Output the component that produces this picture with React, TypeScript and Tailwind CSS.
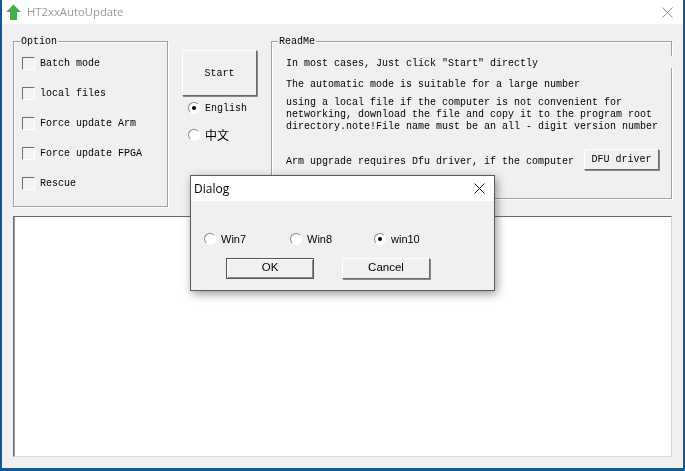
import React from 'react';

const mono = "font-['Liberation_Mono',monospace] text-[10px] text-black";
const sans = "font-['Liberation_Sans',sans-serif] text-[11px] text-black";
const btnText = "font-['Liberation_Sans',sans-serif] text-[11.5px] text-black";
const etched = 'border border-[#a0a0a0] shadow-[inset_1px_1px_0_#fff,1px_1px_0_#fff]';
const raised =
  'border border-t-white border-l-white border-r-[#696969] border-b-[#696969] shadow-[1px_1px_0_#8a8a8a] bg-[#f0f0f0]';

function Radio({ checked }: { checked?: boolean }) {
  return (
    <span className="flex h-[12px] w-[12px] shrink-0 items-center justify-center rounded-full border border-t-[#8a8a8a] border-l-[#8a8a8a] border-r-white border-b-white bg-white">
      {checked && <span className="h-[4px] w-[4px] rounded-full bg-black" />}
    </span>
  );
}

function Check({ label }: { label: string }) {
  return (
    <div className="flex h-[14px] items-center gap-[5px]">
      <span className="h-[13px] w-[13px] shrink-0 border border-t-[#6e6e6e] border-l-[#6e6e6e] border-r-white border-b-white bg-[#f4f4f4]" />
      <span className={mono}>{label}</span>
    </div>
  );
}

function GroupLabel({ text }: { text: string }) {
  return (
    <span className={`absolute top-[-6px] left-[6px] bg-[#f0f0f0] px-px leading-[12px] ${mono}`}>{text}</span>
  );
}

function Dialog() {
  return (
    <div className="absolute top-[175px] left-[190px] flex h-[116px] w-[305px] flex-col border border-[#5a5a5a] bg-[#f0f0f0] shadow-[2px_3px_9px_rgba(0,0,0,0.4)]">
      <div className="flex h-[25px] shrink-0 items-center justify-between bg-white pr-[9px] pl-[3px]">
        <span className="font-['Open_Sans',sans-serif] text-[12px] text-black">Dialog</span>
        <svg width="11" height="11" viewBox="0 0 11 11" stroke="#111" strokeWidth="1">
          <path d="M0.5 0.5 10.5 10.5M10.5 0.5 0.5 10.5" />
        </svg>
      </div>
      <div className="mt-[31px] flex h-[14px] items-center pl-[13px]">
        <div className="flex w-[86px] items-center gap-[5px]">
          <Radio />
          <span className={sans}>Win7</span>
        </div>
        <div className="flex w-[84px] items-center gap-[5px]">
          <Radio />
          <span className={sans}>Win8</span>
        </div>
        <div className="flex items-center gap-[5px]">
          <Radio checked />
          <span className={sans}>win10</span>
        </div>
      </div>
      <div className="mt-[12px] flex pl-[35px]">
        <button className={`h-[21px] w-[88px] border border-[#555] pb-[2px] shadow-[inset_1px_1px_0_#fff,inset_-1px_-1px_0_#8a8a8a] ${btnText}`}>OK</button>
        <button className={`ml-[28px] h-[21px] w-[88px] pb-[2px] ${raised} ${btnText}`}>Cancel</button>
      </div>
    </div>
  );
}

export default function App() {
  return (
    <div className="relative flex h-[471px] w-[685px] flex-col overflow-hidden bg-[#0f5a96] px-[2px] pb-[3px] will-change-transform">
      <div className="flex h-[24px] shrink-0 items-center justify-between bg-white pr-[10px] pl-[4px]">
        <div className="flex items-center gap-[6px]">
          <svg width="15" height="16" viewBox="0 0 15 16">
            <path d="M7.5 0.5 15 8H11V16H4V8H0Z" fill="#47ae4d" />
          </svg>
          <span className="font-['Open_Sans',sans-serif] text-[11.3px] text-[#999]">HT2xxAutoUpdate</span>
        </div>
        <svg width="11" height="11" viewBox="0 0 11 11" stroke="#8a8a8a" strokeWidth="1">
          <path d="M0.5 0.5 10.5 10.5M10.5 0.5 0.5 10.5" />
        </svg>
      </div>

      <div className="flex flex-1 flex-col bg-[#f0f0f0] px-[11px] pt-[17px]">
        <div className="flex">
          <div className={`relative flex h-[166px] w-[155px] flex-col gap-[16px] pt-[14px] pl-[8px] ${etched}`}>
            <GroupLabel text="Option" />
            <Check label="Batch mode" />
            <Check label="local files" />
            <Check label="Force update Arm" />
            <Check label="Force update FPGA" />
            <Check label="Rescue" />
          </div>

          <div className="ml-[14px] flex w-[75px] flex-col pt-[9px]">
            <button className={`h-[46px] w-[75px] ${raised} ${mono}`}>Start</button>
            <div className="mt-[5px] ml-[6px] flex h-[14px] items-center gap-[5px]">
              <Radio checked />
              <span className={mono}>English</span>
            </div>
            <div className="mt-[13px] ml-[6px] flex h-[14px] items-center gap-[5px]">
              <Radio />
              <span className="font-['Noto_Sans_CJK_SC',sans-serif] text-[12px] text-black">中文</span>
            </div>
          </div>

          <div className={`relative ml-[14px] h-[158px] w-[401px] pl-[14px] ${etched}`}>
            <GroupLabel text="ReadMe" />
            <span className="absolute top-[14px] right-[-2px] h-[12px] w-[3px] bg-[#f0f0f0]" />
            <p className={`mt-[16px] leading-[12px] ${mono}`}>In most cases, Just click "Start" directly</p>
            <p className={`mt-[9px] leading-[12px] ${mono}`}>The automatic mode is suitable for a large number</p>
            <p className={`mt-[6px] leading-[12px] whitespace-pre ${mono}`}>
              {'using a local file if the computer is not convenient for\nnetworking, download the file and copy it to the program root\ndirectory.note!File name must be an all - digit version number'}
            </p>
            <div className="mt-[16px] flex items-center">
              <span className={`pt-[4px] ${mono}`}>Arm upgrade requires Dfu driver, if the computer</span>
              <button className={`ml-[10px] h-[21px] w-[75px] ${raised} ${mono}`}>DFU driver</button>
            </div>
          </div>
        </div>

        <div className="mt-[9px] h-[241px] border border-t-[#696969] border-l-[#696969] border-r-[#d8d8d8] border-b-[#d8d8d8] bg-white shadow-[inset_1px_0_0_#a0a0a0]" />
      </div>

      <Dialog />
    </div>
  );
}
